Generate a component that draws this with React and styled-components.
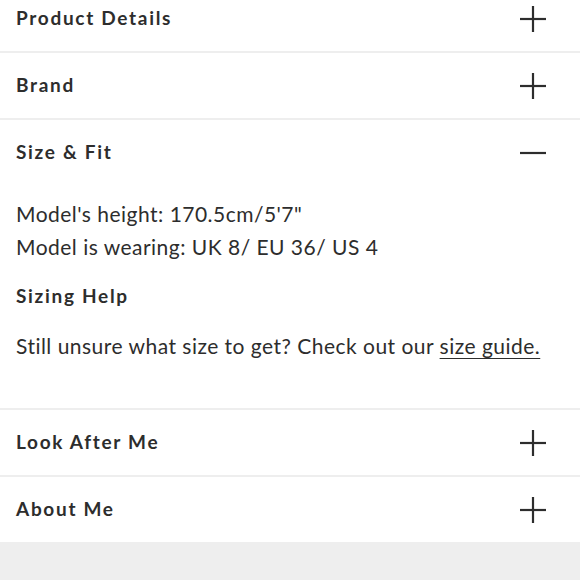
import React from "react";
import styled, { createGlobalStyle } from "styled-components";

const Global = createGlobalStyle`
  html, body { margin: 0; padding: 0; background: #ffffff; }
  body { font-family: "Lato", "DejaVu Sans", sans-serif; color: #2d2d2d; overflow: hidden; }
`;

const Page = styled.div`
  width: 580px;
  height: 580px;
  display: flex;
  flex-direction: column;
  overflow: hidden;
  background: #eeeeee;
`;

const List = styled.div`
  margin-top: -14px;
  background: #ffffff;
  display: flex;
  flex-direction: column;
`;

const Section = styled.section`
  border-bottom: ${(p) => (p.$last ? "none" : "2px solid #eeeeee")};
`;

const Header = styled.div`
  height: 65px;
  display: flex;
  align-items: center;
  justify-content: space-between;
  padding: 0 33px 0 16px;
`;

const Title = styled.h3`
  margin: 0;
  font-size: 19px;
  font-weight: 700;
  letter-spacing: 1.7px;
  line-height: 28px;
  color: #2d2d2d;
  transform: translateY(-1px);
`;

const Body = styled.div`
  padding: 12px 16px 46px;
  font-size: 21px;
  line-height: 33px;
  letter-spacing: 0.48px;
  color: #2d2d2d;
`;

const Para = styled.p`
  margin: 0;
`;

const SubTitle = styled(Title)`
  margin: 18px 0 20px;
  transform: translateY(1px);
`;

const Link = styled.a`
  color: inherit;
  text-decoration: underline;
  text-underline-offset: 4px;
  text-decoration-thickness: 1px;
`;

const Icon = ({ open }) => (
  <svg width="28" height="28" viewBox="0 0 28 28" aria-hidden="true">
    <path d="M1 14h26" stroke="#2d2d2d" strokeWidth="2.2" />
    {!open && <path d="M14 1v26" stroke="#2d2d2d" strokeWidth="2.2" />}
  </svg>
);

const Row = ({ title, open, last, children }) => (
  <Section $last={last}>
    <Header>
      <Title>{title}</Title>
      <Icon open={open} />
    </Header>
    {open && children}
  </Section>
);

export default function App() {
  return (
    <>
      <Global />
      <Page>
        <List>
          <Row title="Product Details" />
          <Row title="Brand" />
          <Row title="Size & Fit" open>
            <Body>
              <Para>Model's height: 170.5cm/5'7"</Para>
              <Para>Model is wearing: UK 8/ EU 36/ US 4</Para>
              <SubTitle as="h4">Sizing Help</SubTitle>
              <Para>
                Still unsure what size to get? Check out our{" "}
                <Link href="#">size guide.</Link>
              </Para>
            </Body>
          </Row>
          <Row title="Look After Me" />
          <Row title="About Me" last />
        </List>
      </Page>
    </>
  );
}
